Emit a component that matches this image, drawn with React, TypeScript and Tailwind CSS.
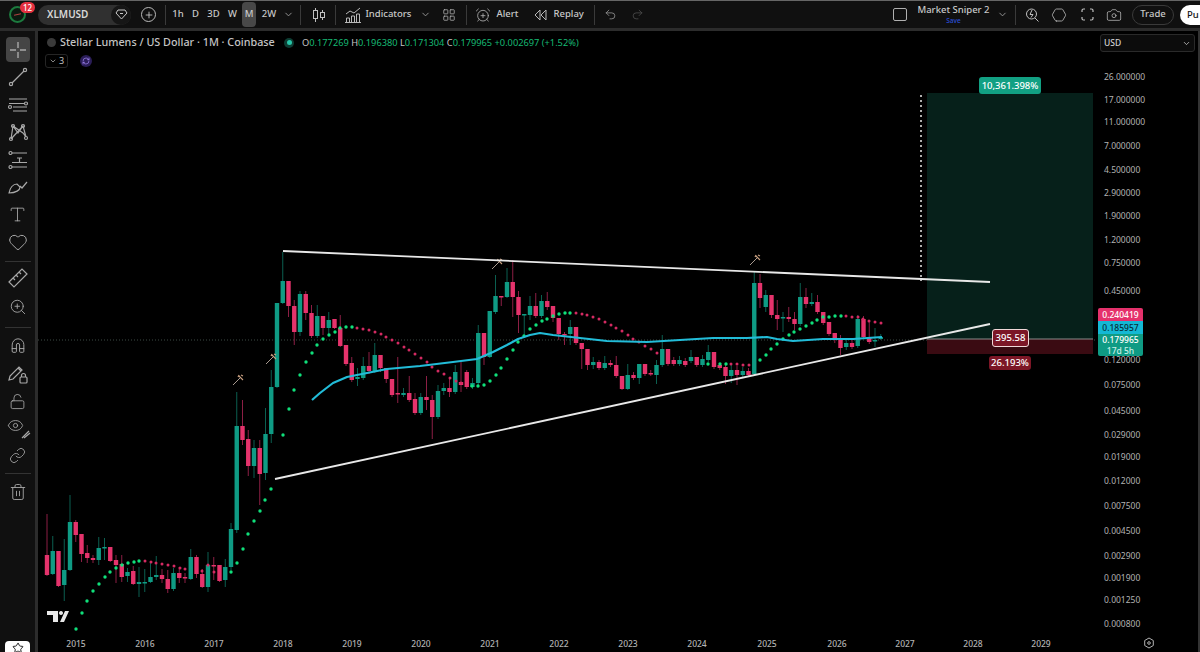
import { ChevronDown, Plus, Trash2, Link, Eye, ZoomIn, Type, Heart, Star, Camera, Hexagon, LockOpen, Magnet, Undo2, Redo2, AlarmClockPlus, LayoutGrid, RefreshCw } from "lucide-react";

const font = "font-['Noto_Sans','DejaVu_Sans',sans-serif]";

// [colour, wick top, body top, body bottom, wick bottom], one per month from Aug 2014
const candles: [string, number, number, number, number][] = [
  ["r",514,555,575,576],["g",536,551,574,575],["r",551,551,586,587],["g",539,570,585,601],["g",495,522,570,571],
  ["r",520,522,535,542],["r",534,534,554,562],["r",545,553,558,563],["r",555,558,560,563],["g",537,548,560,565],
  ["g",538,547,548,560],["r",547,547,561,562],["r",555,560,565,583],["r",555,564,577,582],["g",568,572,576,582],
  ["r",566,571,584,585],["g",567,582,584,597],["g",569,582,583,592],["g",563,577,582,583],["g",556,575,577,580],
  ["r",569,575,579,583],["r",570,579,589,593],["g",568,573,589,591],["r",567,573,578,583],["r",573,577,578,583],
  ["g",549,557,579,580],["r",555,557,574,578],["r",569,574,587,588],["g",552,565,587,592],["r",557,565,566,580],
  ["r",565,565,581,582],["g",559,567,580,587],["g",523,529,567,570],["g",392,426,530,533],["r",400,426,440,445],
  ["r",430,439,466,476],["g",440,448,466,478],["r",440,448,474,505],["g",408,434,473,480],["g",370,387,434,443],
  ["g",303,303,387,388],["g",252,281,303,304],["r",281,281,306,317],["r",300,306,332,345],["g",291,294,332,336],
  ["r",291,294,313,320],["r",305,313,336,338],["g",305,316,336,338],["r",316,316,328,335],["g",312,320,328,334],
  ["r",319,319,328,329],["r",315,328,346,347],["r",345,345,364,366],["r",357,363,380,382],["g",368,377,379,386],
  ["g",357,366,378,380],["r",352,366,371,374],["g",343,355,371,373],["r",355,355,368,372],["r",368,368,379,383],
  ["r",379,379,395,397],["r",357,393,394,403],["g",388,393,395,397],["r",376,393,400,402],["r",393,399,413,415],
  ["g",393,397,413,415],["r",376,397,400,410],["r",395,400,417,439],["g",385,391,417,419],["g",383,388,391,395],
  ["r",377,388,392,397],["g",365,372,392,394],["r",362,382,385,392],["r",370,372,387,389],["g",378,383,387,389],
  ["g",325,333,383,385],["r",333,333,357,365],["g",311,311,357,358],["g",275,296,312,314],["r",296,296,297,306],
  ["g",268,282,297,298],["r",260,282,297,317],["r",291,297,315,333],["g",314,314,315,337],["g",296,306,315,320],
  ["r",293,306,316,318],["g",295,301,316,318],["r",292,301,307,310],["r",306,306,318,322],["r",318,318,334,340],
  ["r",332,334,335,345],["g",320,327,334,345],["r",327,327,343,345],["r",343,343,349,369],["r",349,349,365,370],
  ["g",357,362,365,369],["r",360,362,368,370],["g",356,363,368,370],["r",360,363,365,367],["r",356,365,376,378],
  ["r",376,376,389,390],["g",364,375,389,390],["r",372,375,378,380],["g",364,364,378,384],["r",364,364,374,376],
  ["r",370,373,374,376],["g",360,365,375,384],["g",335,349,365,367],["r",349,349,364,366],["r",357,360,364,366],
  ["g",356,360,364,366],["r",358,361,365,367],["g",350,357,361,363],["r",357,357,365,367],["g",355,359,365,367],
  ["g",345,352,360,362],["r",352,352,367,369],["r",363,365,368,370],["r",365,367,376,384],["g",365,370,376,383],
  ["r",366,370,375,385],["g",367,371,375,378],["r",368,371,375,377],["g",272,283,374,375],["r",274,283,298,308],
  ["g",290,295,307,312],["r",295,295,315,318],["r",300,315,319,330],["g",312,317,318,332],["r",307,317,319,322],
  ["r",312,319,324,330],["g",283,297,324,326],["r",288,297,304,308],["g",293,302,304,306],["r",295,302,312,314],
  ["r",312,312,323,325],["r",322,322,334,336],["r",333,333,339,343],["r",335,339,348,355],["g",340,343,347,350],
  ["r",340,343,347,349],["g",315,319,346,348],["r",316,319,337,339],["r",320,337,342,344],["g",328,340,341,347],
  ["g",334,337,339,340],
];

const hma = "312,400 320,393 333,383 347,377 367,373 387,369 420,366 453,362 477,359 493,352 507,345 518,339 530,335 540,333 553,335 580,338 607,341 647,342 680,340 713,338 747,338 767,337 777,339 793,341 823,339 853,339 882,337";

const greenDots = [[76,629],[82,613],[87,601],[93,591],[99,584],[105,577],[110,572],[116,568],[122,565],[128,563],[134,562],[139,561],[231,572],[237,563],[243,549],[248,534],[254,521],[260,511],[265,500],[271,489],[283,435],[289,409],[294,390],[300,375],[306,362],[312,353],[317,345],[323,339],[329,335],[335,332],[340,328],[346,327],[352,327],[472,386],[478,386],[484,385],[490,381],[496,375],[501,368],[507,359],[513,350],[518,342],[524,336],[530,329],[536,325],[542,321],[547,319],[553,316],[559,314],[565,313],[570,313],[708,364],[720,364],[726,364],[760,360],[766,355],[771,349],[777,344],[783,339],[789,335],[794,332],[800,329],[806,326],[812,323],[817,320],[823,317],[829,317],[835,316],[841,316]];
const redDots = [[145,561],[151,562],[156,563],[162,564],[168,565],[174,566],[180,568],[185,569],[202,571],[208,565],[214,572],[357,328],[363,329],[369,330],[375,332],[381,334],[386,337],[392,340],[398,343],[404,347],[409,350],[415,354],[421,358],[427,362],[432,367],[438,371],[444,374],[450,378],[456,381],[461,383],[576,313],[582,314],[587,315],[593,317],[599,319],[605,322],[611,325],[616,328],[622,331],[628,335],[633,339],[639,342],[645,346],[651,349],[657,353],[731,364],[737,364],[743,365],[749,365],[846,316],[852,317],[858,317],[863,319],[869,321],[875,322],[881,323]];

const priceTicks: [string, number][] = [["26.000000",77],["17.000000",100],["11.000000",122],["7.000000",146],["4.500000",170],["2.900000",193],["1.900000",216],["1.200000",240],["0.750000",263],["0.450000",291],["0.120000",360],["0.075000",385],["0.045000",411],["0.029000",435],["0.019000",457],["0.012000",481],["0.007500",506],["0.004500",531],["0.002900",556],["0.001900",578],["0.001250",600],["0.000800",624]];
const years: [string, number][] = [["2015",76],["2016",145],["2017",214],["2018",283],["2019",352],["2020",421],["2021",490],["2022",559],["2023",628],["2024",697],["2025",767],["2026",837],["2027",905],["2028",973],["2029",1041]];
const wands = [[242,375],[275,354],[501,259],[759,255]];

const Sep = () => <div className="w-px h-[20px] bg-[#3a3a3a] shrink-0" />;

const LineTool = () => (
  <svg width="22" height="22" viewBox="0 0 22 22" fill="none" stroke="#a8a8a8" strokeWidth="1.2">
    <line x1="5" y1="17" x2="17" y2="5" /><circle cx="4" cy="18" r="1.6" /><circle cx="18" cy="4" r="1.6" />
  </svg>
);
const ChannelTool = () => (
  <svg width="22" height="22" viewBox="0 0 22 22" fill="none" stroke="#a8a8a8" strokeWidth="1.2">
    <path d="M2 5h18M2 9.500h15M6 13h14M6 17h14" /><circle cx="19" cy="9.500" r="1.500" /><circle cx="3" cy="13" r="1.500" />
  </svg>
);
const PatternTool = () => (
  <svg width="22" height="22" viewBox="0 0 22 22" fill="none" stroke="#a8a8a8" strokeWidth="1.2">
    <path d="M4 18 6 5l5 7 5-7 3 11M6 5l10 7 3 4M4 18l12-13" /><circle cx="4" cy="18" r="1.500" /><circle cx="6" cy="5" r="1.500" /><circle cx="16" cy="5" r="1.500" /><circle cx="19" cy="17" r="1.500" />
  </svg>
);
const ForecastTool = () => (
  <svg width="22" height="22" viewBox="0 0 22 22" fill="none" stroke="#a8a8a8" strokeWidth="1.2">
    <path d="M5 4h15M5 18h15M10 9h5M12.500 9v4M5 13.500h15" /><circle cx="3.500" cy="4" r="1.500" /><circle cx="3.500" cy="18" r="1.500" />
  </svg>
);
const BrushTool = () => (
  <svg width="22" height="22" viewBox="0 0 22 22" fill="none" stroke="#a8a8a8" strokeWidth="1.2">
    <path d="M2 17c1-5 4-9 8-9l3 3c0 3-4 6-11 6ZM13 10l2 2 5-6" />
  </svg>
);
const Ruler = () => (
  <svg width="22" height="22" viewBox="0 0 22 22" fill="none" stroke="#a8a8a8" strokeWidth="1.2">
    <path d="m2 15 13-13 5 5L7 20ZM6 11l2 2M9 8l2 2M12 5l2 2" />
  </svg>
);
const PencilLock = () => (
  <svg width="22" height="22" viewBox="0 0 22 22" fill="none" stroke="#a8a8a8" strokeWidth="1.2">
    <path d="m2 17 1-4 9-9 3 3-9 9ZM11 5l3 3" /><rect x="13" y="14" width="7" height="6" rx="1" /><path d="M14.500 14v-1.500a2 2 0 0 1 4 0V14" />
  </svg>
);
const EyeDraw = () => (
  <div className="relative w-[22px] h-[22px]">
    <Eye size={17} strokeWidth={1.2} color="#a8a8a8" />
    <svg className="absolute right-[-2px] bottom-0" width="10" height="10" viewBox="0 0 10 10" fill="none" stroke="#a8a8a8" strokeWidth="1.200"><path d="m1 9 7-7M3 9l6-5" /></svg>
  </div>
);
const Crosshair = () => (
  <svg width="18" height="18" viewBox="0 0 18 18" stroke="#a8a8a8" strokeWidth="1.400"><path d="M9 1v6M9 11v6M1 9h6M11 9h6" /></svg>
);

const tools = [
  {
    row: "h-[27.500px]",
    sep: "mt-[1.250px]",
    icons: [<LineTool key="a" />, <ChannelTool key="b" />, <PatternTool key="c" />, <ForecastTool key="d" />, <BrushTool key="e" />, <Type key="f" size={19} strokeWidth={1.1} color="#a8a8a8" />, <Heart key="g" size={20} strokeWidth={1.2} color="#a8a8a8" />],
  },
  {
    row: "h-[29px]",
    sep: "w-[26px] h-px bg-[#333] mt-[5.250px] mb-[1.500px]",
    icons: [<Ruler key="a" />, <ZoomIn key="b" size={18} strokeWidth={1.2} color="#a8a8a8" />],
  },
  {
    row: "h-[27px]",
    sep: "w-[26px] h-px bg-[#333] mt-[5.500px] mb-[5.500px]",
    icons: [<Magnet key="a" size={18} strokeWidth={1.2} color="#a8a8a8" className="-rotate-45" />, <PencilLock key="b" />, <LockOpen key="c" size={17} strokeWidth={1.2} color="#a8a8a8" />, <EyeDraw key="d" />, <Link key="e" size={17} strokeWidth={1.2} color="#a8a8a8" />],
  },
  {
    row: "h-[27px]",
    sep: "w-[26px] h-px bg-[#333] mt-[4.500px] mb-[4.500px]",
    icons: [<Trash2 key="a" size={18} strokeWidth={1.2} color="#a8a8a8" />],
  },
];

export default function App() {
  return (
    <div className={`${font} w-[1200px] h-[652px] overflow-hidden bg-black flex flex-col text-[#d1d1d1]`}>
      {/* TOP BAR */}
      <header className="h-[31px] shrink-0 bg-[#101010] border-t border-t-[#666] border-b-[3px] border-b-[#2c2c2c] flex items-center text-[9.500px] font-medium text-[#c8c8c8] relative">
        <div className="relative w-[38px] h-full shrink-0 flex items-center justify-center">
          <div className="w-[17px] h-[17px] rounded-full border-2 border-[#1c7a3e] bg-[#0b1a10] ml-[-4px] mt-[-1px] flex items-center justify-center">
            <span className="w-[7px] h-px bg-[#b04040] -rotate-12" />
          </div>
          <span className="absolute left-[20px] top-[1px] w-[15px] h-[11px] rounded-full bg-[#e5303f] text-white text-[8px] leading-[11px] text-center">12</span>
        </div>
        <div className="w-[93px] h-[20px] shrink-0 rounded-full bg-[#303030] flex items-center justify-between pl-[9px] text-[10px] font-semibold text-[#d8d8d8]">
          XLMUSD
          <span className="w-[20px] h-[20px] rounded-full bg-[#161616] flex items-center justify-center">
            <svg width="13" height="11" viewBox="0 0 13 11" fill="none" stroke="#c8c8c8"><path d="M3 1h7l2 3-5.500 6L1 4ZM5 4.500h3" /></svg>
          </span>
        </div>
        <span className="ml-[10px] w-[15px] h-[15px] rounded-full border border-[#bbb] flex items-center justify-center shrink-0"><Plus size={10} color="#ccc" /></span>
        <div className="ml-[9px]"><Sep /></div>
        <div className="flex items-center h-[25px] ml-[4px]">
          <span className="w-[16px] text-center">1h</span>
          <span className="w-[19px] text-center">D</span>
          <span className="w-[17px] text-center">3D</span>
          <span className="w-[17px] text-center ml-[2px]">W</span>
          <span className="w-[14px] h-[25px] ml-[1px] rounded-sm bg-[#484848] flex items-center justify-center">M</span>
          <span className="w-[18px] text-center ml-[4px]">2W</span>
          <ChevronDown size={11} color="#999" className="ml-[4.500px]" />
        </div>
        <div className="ml-[6.500px]"><Sep /></div>
        <svg className="ml-[10.500px] shrink-0" width="14" height="16" viewBox="0 0 14 16" fill="none" stroke="#c0c0c0"><path d="M3.500 1v14M10.500 3v10" /><rect x="1.500" y="3.500" width="4" height="8" fill="#101010" /><rect x="8.500" y="5.500" width="4" height="5" fill="#101010" /></svg>
        <div className="ml-[9px]"><Sep /></div>
        <svg className="ml-[9px] shrink-0" width="16" height="16" viewBox="0 0 16 16" fill="none" stroke="#b8b8b8"><path d="m1 7 4-3 4 2 6-5M1.500 15v-4h3v4M6.500 15V9h3v6M11.500 15V7h3v8M0 15.500h16" /></svg>
        <span className="ml-[5px] w-[50px]">Indicators</span>
        <ChevronDown size={11} color="#999" className="ml-[4.500px]" />
        <LayoutGrid size={14} strokeWidth={1.3} color="#b8b8b8" className="ml-[10.500px]" />
        <div className="ml-[10px]"><Sep /></div>
        <AlarmClockPlus size={16} strokeWidth={1.200} color="#b8b8b8" className="ml-[8px]" />
        <span className="ml-[6px] w-[22px]">Alert</span>
        <svg className="ml-[15.500px] shrink-0" width="13" height="12" viewBox="0 0 13 12" fill="none" stroke="#b8b8b8"><path d="M6 1 1 6l5 5ZM12 1 7 6l5 5Z" /></svg>
        <span className="ml-[6.500px] w-[29px]">Replay</span>
        <div className="ml-[11px]"><Sep /></div>
        <Undo2 size={13} strokeWidth={1.300} color="#a8a8a8" className="ml-[9.500px]" />
        <Redo2 size={13} strokeWidth={1.300} color="#555" className="ml-[14px]" />

        <div className="ml-auto flex items-center">
          <span className="w-[14px] h-[13px] rounded-[2px] border border-[#b0b0b0] shrink-0" />
          <div className="ml-[10px] w-[73px] flex flex-col items-center gap-[3px]">
            <span className="text-[9.500px] leading-[9px] whitespace-nowrap">Market Sniper 2</span>
            <span className="text-[6.500px] leading-[7px] text-[#2a4fd8]">Save</span>
          </div>
          <ChevronDown size={11} color="#999" className="ml-[6.500px]" />
          <div className="ml-[7.500px]"><Sep /></div>
          <svg className="ml-[8.500px] shrink-0" width="15" height="15" viewBox="0 0 15 15" fill="none" stroke="#c0c0c0"><circle cx="6.500" cy="7" r="5" /><path d="m10 11 3.500 3.500M7 3 5 7.500h3l-2 3" /></svg>
          <Hexagon size={16} strokeWidth={1.200} color="#c0c0c0" className="ml-[11.500px] rotate-90" />
          <svg className="ml-[13.500px] shrink-0" width="13" height="13" viewBox="0 0 13 13" fill="none" stroke="#c0c0c0" strokeWidth="1.200"><path d="M1 4V2.500A1.500 1.500 0 0 1 2.500 1H4M9 1h1.500A1.500 1.500 0 0 1 12 2.500V4M12 9v1.500a1.500 1.500 0 0 1-1.500 1.500H9M4 12H2.500A1.500 1.500 0 0 1 1 10.500V9" /></svg>
          <Camera size={16} strokeWidth={1.100} color="#c0c0c0" className="ml-[12.500px]" />
          <span className="ml-[10px] w-[42px] h-[20px] rounded-full border border-[#3a3a3a] flex items-center justify-center">Trade</span>
          <span className="ml-[6px] w-[20px] h-[20px] rounded-l-full bg-white text-[#111] leading-[20px] pl-[7px] overflow-hidden">Pu</span>
        </div>
      </header>

      <div className="flex-1 flex min-h-0">
        {/* LEFT TOOLBAR */}
        <aside className="w-[38px] shrink-0 bg-[#101010] border-r-[3px] border-r-[#2c2c2c] flex flex-col items-center relative pt-[6px]">
          <div className="w-[24px] h-[25px] rounded-[4px] bg-[#454545] flex items-center justify-center shrink-0"><Crosshair /></div>
          {tools.map((group, i) => (
            <div key={i} className="flex flex-col items-center">
              <div className={group.sep} />
              {group.icons.map((icon, j) => (
                <div key={j} className={`w-[24px] flex items-center justify-center ${group.row}`}>{icon}</div>
              ))}
            </div>
          ))}
          <div className="mt-auto w-[25px] h-[11px] rounded-t-[4px] bg-white flex justify-center overflow-hidden"><Star size={12} color="#222" className="mt-[1px]" /></div>
        </aside>

        {/* CHART */}
        <main className="flex-1 relative bg-black border-r-2 border-r-[#333] overflow-hidden">
          <svg className="absolute inset-0" width="1160" height="621" viewBox="38 31 1160 621">
            <line x1="38" y1="340" x2="1095" y2="340" stroke="#3d4a44" strokeWidth="1" strokeDasharray="1 2" />
            <rect x="927" y="93" width="166" height="246" fill="#06201a" />
            <rect x="927" y="339" width="166" height="15" fill="#3a0b12" />
            <line x1="927" y1="339" x2="1093" y2="339" stroke="#8a8a8a" />
            <line x1="921" y1="95" x2="921" y2="281" stroke="#e8e8e8" strokeWidth="1.500" strokeDasharray="2 3" />

            {candles.map(([c, wt, t, b, wb], i) => {
              const x = 47 + i * 5.75;
              return (
                <g key={i}>
                  <line x1={x} x2={x} y1={wt} y2={wb} stroke={c === "g" ? "#0b5f50" : "#8c1f45"} strokeWidth="1" />
                  <rect x={x - 2.200} y={t} width="4.400" height={Math.max(b - t, 1.500)} fill={c === "g" ? "#0f9b84" : "#e5336c"} />
                </g>
              );
            })}

            {greenDots.map(([x, y], i) => <circle key={i} cx={x} cy={y} r="1.700" fill="#0fe07a" />)}
            {redDots.map(([x, y], i) => <circle key={i} cx={x} cy={y} r="1.500" fill="#d42a62" />)}
            <polyline points={hma} fill="none" stroke="#22bcd8" strokeWidth="2.200" strokeLinejoin="round" />

            {wands.map(([x, y], i) => (
              <g key={i}>
                <line x1={x - 9} y1={y + 10} x2={x - 2} y2={y + 3} stroke="#a89a90" strokeWidth="1" />
                <path d={`M${x - 3} ${y + 1}l4 4M${x - 1} ${y}l2 1M${x - 4} ${y + 2}l1-2`} stroke="#c9a080" strokeWidth="1.100" fill="none" />
              </g>
            ))}

            <line x1="283" y1="251" x2="990" y2="282" stroke="#e8e8e8" strokeWidth="1.800" />
            <line x1="275" y1="479" x2="990" y2="324" stroke="#e8e8e8" strokeWidth="1.800" />

            {/* tradingview logo */}
            <path d="M47 611h11v11h-5v-7h-6ZM61 611a2 2 0 1 0 .01 0ZM65 611h4l-5 11h-4Z" fill="#e8e8e8" />

            {priceTicks.map(([t, y]) => (
              <text key={t} x="1104" y={y + 3} fontSize="8.500" fill="#b2b2b2">{t}</text>
            ))}
            {years.map(([t, x]) => (
              <text key={t} x={x} y="647" fontSize="8.500" fill="#b2b2b2" textAnchor="middle" fontWeight="500">{t}</text>
            ))}
            <g fill="none" stroke="#b2b2b2"><path d="m1149 638 4.300 2.500v5L1149 648l-4.300-2.500v-5Z" /><circle cx="1149" cy="643" r="1.300" /></g>
          </svg>

          {/* LEGEND */}
          <div className="relative flex items-center h-[23px] pl-[8.500px] whitespace-nowrap">
            <span className="w-[9px] h-[9px] rounded-full bg-[#3a3a3a] mr-[4.500px]" />
            <span className="w-[216px] text-[10.800px] text-[#c4c4c4] font-medium">Stellar Lumens / US Dollar · 1M · Coinbase</span>
            <span className="ml-[8px] w-[10px] h-[10px] rounded-full bg-[#0d3d33] flex items-center justify-center"><span className="w-[5px] h-[5px] rounded-full bg-[#27c5a8]" /></span>
            <span className="ml-[8px] text-[9.250px] text-[#c4c4c4]">O<span className="text-[#16b873]">0.177269</span> H<span className="text-[#16b873]">0.196380</span> L<span className="text-[#16b873]">0.171304</span> C<span className="text-[#16b873]">0.179965</span> <span className="text-[#16b873]">+0.002697 (+1.52%)</span></span>
          </div>
          <div className="relative flex items-center pl-[7px] gap-[12px]">
            <span className="w-[23px] h-[14px] rounded-[3px] border border-[#252525] flex items-center justify-center gap-[2px] text-[9px] text-[#c4c4c4]"><ChevronDown size={8} />3</span>
            <span className="w-[12px] h-[12px] rounded-full bg-[#2a1d57] flex items-center justify-center"><RefreshCw size={8} color="#a78bfa" strokeWidth={2} /></span>
          </div>

          <div className="absolute left-[1062px] top-[3px] w-[95px] h-[18px] rounded-[3px] border border-[#2a2a2a] bg-[#0c0c0c] flex items-center justify-between px-[3px] text-[8.500px] font-medium">
            USD <ChevronDown size={9} />
          </div>

          {/* POSITION LABELS */}
          <span className="absolute left-[941px] top-[46px] w-[62px] h-[17px] rounded-[3px] bg-[#12a083] text-white text-[9.500px] font-medium leading-[17px] text-center">10,361.398%</span>
          <span className="absolute left-[954px] top-[298px] w-[37px] h-[18px] rounded-[3px] bg-[#7c1626] border border-[#f0d8d8] text-white text-[9.500px] font-medium leading-[16px] text-center">395.58</span>
          <span className="absolute left-[951px] top-[325px] w-[42px] h-[14px] rounded-[3px] bg-[#7c1626] text-white text-[9.500px] font-medium leading-[14px] text-center">26.193%</span>

          {/* PRICE TAGS */}
          <div className="absolute left-[1060px] top-[277px] w-[45px] text-[8.500px] font-medium text-center leading-[13px]">
            <div className="h-[13px] bg-[#e5316b] text-white rounded-t-[2px]">0.240419</div>
            <div className="h-[13px] bg-[#14b8d4] text-[#06303a]">0.185957</div>
            <div className="h-[22px] bg-[#0f9b84] text-white rounded-b-[2px] leading-[11px]">0.179965<br /><span className="text-[#c8efe6]">17d 5h</span></div>
          </div>
        </main>
      </div>
    </div>
  );
}
